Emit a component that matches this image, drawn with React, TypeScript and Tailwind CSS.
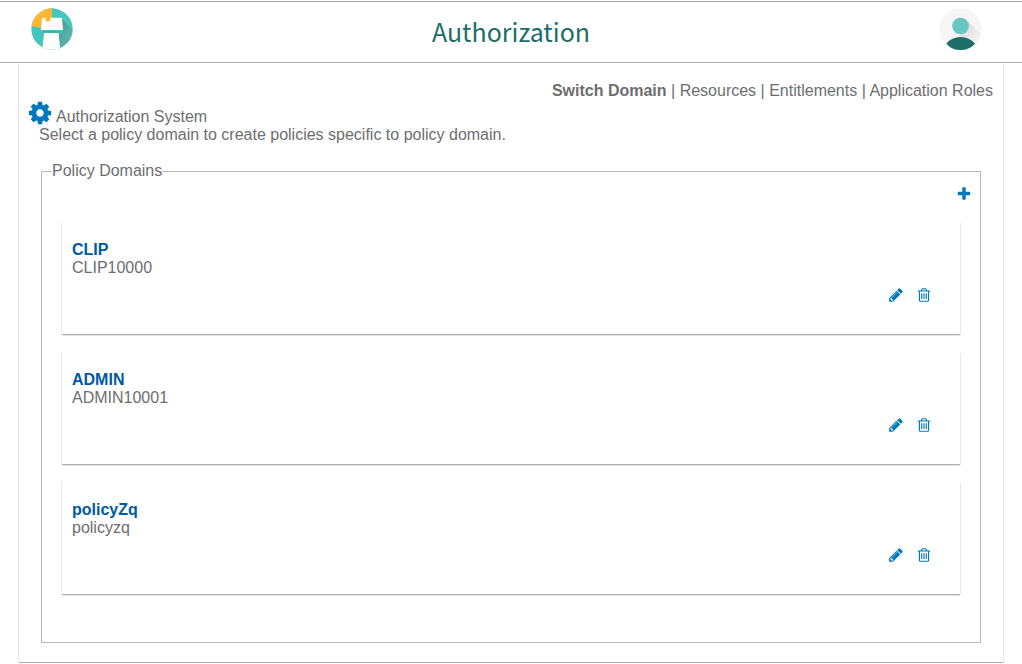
import React from "react";

const icons = {
  plus: "M1600 736v192q0 40-28 68t-68 28h-416v416q0 40-28 68t-68 28h-192q-40 0-68-28t-28-68v-416h-416q-40 0-68-28t-28-68v-192q0-40 28-68t68-28h416v-416q0-40 28-68t68-28h192q40 0 68 28t28 68v416h416q40 0 68 28t28 68z",
  pencil:
    "M491 1536l91-91-235-235-91 91v107h128v128h107zm523-928q0-22-22-22-10 0-17 7l-542 542q-7 7-7 17 0 22 22 22 10 0 17-7l542-542q7-7 7-17zm-54-192l416 416-832 832h-416v-416l832-832zm683 96q0 53-37 90l-166 166-416-416 166-165q36-38 90-38 53 0 91 38l235 234q37 39 37 91z",
  trash:
    "M704 736v576q0 14-9 23t-23 9h-64q-14 0-23-9t-9-23v-576q0-14 9-23t23-9h64q14 0 23 9t9 23zm256 0v576q0 14-9 23t-23 9h-64q-14 0-23-9t-9-23v-576q0-14 9-23t23-9h64q14 0 23 9t9 23zm256 0v576q0 14-9 23t-23 9h-64q-14 0-23-9t-9-23v-576q0-14 9-23t23-9h64q14 0 23 9t9 23zm128 724v-948h-896v948q0 22 7 40.5t14.5 27 10.5 8.5h832q3 0 10.5-8.5t14.5-27 7-40.5zm-672-1076h448l-48-117q-7-9-17-11h-317q-10 2-17 11zm928 32v64q0 14-9 23t-23 9h-96v948q0 83-47 143.5t-113 60.5h-832q-66 0-113-58.5t-47-141.5v-952h-96q-14 0-23-9t-9-23v-64q0-14 9-23t23-9h309l70-167q15-37 54-63t79-26h320q40 0 79 26t54 63l70 167h309q14 0 23 9t9 23z",
  cog: "M1152 896q0-106-75-181t-181-75-181 75-75 181 75 181 181 75 181-75 75-181zm512-109v222q0 12-8 23t-20 13l-185 28q-19 54-39 91 35 50 107 138 10 12 10 25t-9 23q-27 37-99 108t-94 71q-12 0-26-9l-138-108q-44 23-91 38-16 136-29 186-7 28-36 28h-222q-14 0-24.5-8.5t-11.5-21.5l-28-184q-49-16-90-37l-141 107q-10 9-25 9-14 0-25-11-126-114-165-168-7-10-7-23 0-12 8-23 15-21 51-66.5t54-70.5q-27-50-41-99l-183-27q-13-2-21-12.5t-8-23.5v-222q0-12 8-23t19-13l186-28q14-46 39-92-40-57-107-138-10-12-10-24 0-10 9-23 26-36 98.5-107.5t94.5-71.5q13 0 26 10l138 107q44-23 91-38 16-136 29-186 7-28 36-28h222q14 0 24.5 8.5t11.5 21.5l28 184q49 16 90 37l142-107q9-9 24-9 13 0 25 10 129 119 165 170 7 8 7 22 0 12-8 23-15 21-51 66.5t-54 70.5q26 50 41 98l183 28q13 2 21 12.5t8 23.5z",
};

function Icon({ name, className = "size-4" }: { name: keyof typeof icons; className?: string }) {
  return (
    <svg viewBox="0 0 1792 1792" className={className} fill="currentColor" aria-hidden="true">
      <path d={icons[name]} />
    </svg>
  );
}

function Logo() {
  return (
    <svg viewBox="0 0 126 126" className="size-[42px]" aria-hidden="true">
      <defs>
        <clipPath id="disc">
          <circle cx="63" cy="63" r="62" />
        </clipPath>
        <linearGradient id="fold" x1="0" y1="0" x2="1" y2="1">
          <stop offset="0" stopColor="#3f9b96" />
          <stop offset="1" stopColor="#6cc0b8" />
        </linearGradient>
      </defs>
      <g clipPath="url(#disc)">
        <rect width="126" height="126" fill="#46c5bf" />
        <path d="M93 33L126 66V126H84V76H95Z" fill="url(#fold)" />
        <path d="M0 0H63V40L30 60L0 53Z" fill="#fdb833" />
        <path d="M36 29H44V40H58V29H90Q93 29 93 32L96 64Q96 67 93 67H32Q29 67 30 64L33 32Q33 29 36 29Z" fill="#fff" />
        <path d="M30 67H95L84 75H40Z" fill="#3fb3ae" />
        <path d="M42 75H81Q83 75 83 77L88 126H34L39 77Q39 75 42 75Z" fill="#fff" />
      </g>
    </svg>
  );
}

function Avatar() {
  return (
    <svg viewBox="0 0 129 129" className="size-[43px]" aria-hidden="true">
      <defs>
        <clipPath id="face">
          <circle cx="64.5" cy="64.5" r="64" />
        </clipPath>
        <linearGradient id="shade" x1="0" y1="0" x2="1" y2="1">
          <stop offset="0" stopColor="#d4d4d4" />
          <stop offset="0.8" stopColor="#f6f6f6" />
        </linearGradient>
      </defs>
      <g clipPath="url(#face)">
        <rect width="129" height="129" fill="#f6f6f6" />
        <path d="M82 35L129 82V129L64 90V79Z" fill="url(#shade)" />
        <circle cx="64.5" cy="54" r="25" fill="#66c7c2" />
        <path d="M22 107Q38 87 64.5 87T108 107Q90 126 64.5 126T22 107Z" fill="#1d6d69" />
      </g>
    </svg>
  );
}

const domains = [
  { name: "CLIP", id: "CLIP10000" },
  { name: "ADMIN", id: "ADMIN10001" },
  { name: "policyZq", id: "policyzq" },
];

const links = ["Resources", "Entitlements", "Application Roles"];

export default function App() {
  return (
    <div className="bg-white pt-px pb-px font-['Liberation_Sans',Arial,sans-serif] text-base leading-[18px] text-[#6d6e70]">
      <header className="grid h-[62px] grid-cols-[1fr_auto_1fr] items-center border-y border-t-[#a6a6a6] border-b-[#acacac] px-[31px]">
        <a href="#home" aria-label="Home" className="justify-self-start pb-1.5">
          <Logo />
        </a>
        <h1 className="pb-0.5 font-['Noto_Sans_CJK_SC','Noto_Sans',sans-serif] text-[25px] leading-10 text-[#1d6d69]">
          Authorization
        </h1>
        <button type="button" aria-label="Account" className="mr-[9px] justify-self-end pb-1.5">
          <Avatar />
        </button>
      </header>

      <main className="mx-[19px] px-[10px] pt-[19px] pb-[19px] shadow-[-1px_1px_0_rgba(0,0,0,0.11),1px_1px_0_rgba(0,0,0,0.11),0_2px_0_rgba(0,0,0,0.1),0_1px_0_rgba(0,0,0,0.05)]">
        <nav className="text-right">
          <a href="#switch" className="font-bold">Switch Domain</a>
          {links.map((l) => (
            <React.Fragment key={l}>
              {" | "}
              <a href="#section">{l}</a>
            </React.Fragment>
          ))}
        </nav>

        <div className="-ml-0.5 flex items-end gap-[3px]">
          <Icon name="cog" className="size-[26px] text-[#0079bc]" />
          <h2>Authorization System</h2>
        </div>
        <p className="pl-[10px]">Select a policy domain to create policies specific to policy domain.</p>

        <fieldset className="mx-3 mt-[18px] border border-[#b8b8b8] px-[20px] pb-12">
          <legend className="-ml-[10px]">Policy Domains</legend>
          <div className="-mr-3 flex justify-end pt-1.5 pb-5 text-[#0079bc]">
            <button type="button" aria-label="Add policy domain">
              <Icon name="plus" />
            </button>
          </div>
          <ul className="flex flex-col gap-[18px]">
            {domains.map((d) => (
              <li
                key={d.id}
                className="pt-[19px] pr-7 pb-[31px] pl-[10px] shadow-[-1px_1px_0_rgba(0,0,0,0.09),1px_1px_0_rgba(0,0,0,0.09),0_2px_0_rgba(0,0,0,0.1),0_1px_0_rgba(0,0,0,0.08)]"
              >
                <a href="#domain" className="block font-bold text-[#0059a4]">{d.name}</a>
                <p>{d.id}</p>
                <div className="mt-[10px] flex justify-end gap-3 text-[#0079bc]">
                  <button type="button" aria-label={`Edit ${d.name}`}>
                    <Icon name="pencil" />
                  </button>
                  <button type="button" aria-label={`Delete ${d.name}`}>
                    <Icon name="trash" />
                  </button>
                </div>
              </li>
            ))}
          </ul>
        </fieldset>
      </main>
    </div>
  );
}
